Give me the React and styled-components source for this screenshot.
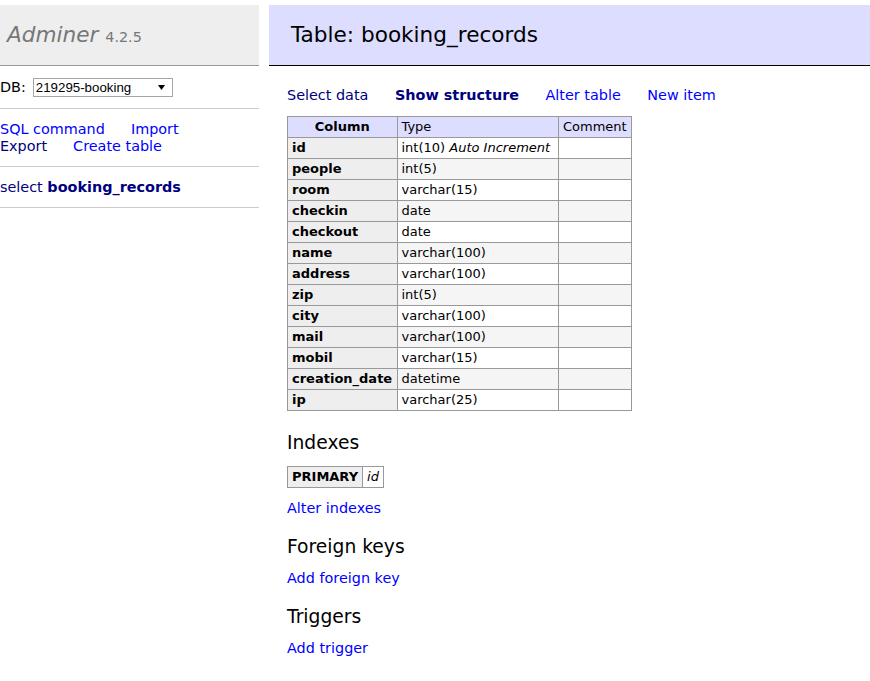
import React from "react";
import styled, { createGlobalStyle } from "styled-components";

const GlobalStyle = createGlobalStyle`
  html, body { margin: 0; padding: 0; background: #fff; }
  body {
    font-family: "DejaVu Sans", Verdana, sans-serif;
    font-size: 14.4px;
    line-height: 18px;
    color: #000;
  }
`;

const Page = styled.div`
  display: flex;
  align-items: flex-start;
  padding-top: 5px;
`;

const Menu = styled.div`
  width: 259px;
  flex: none;
`;

const Logo = styled.h1`
  margin: 0;
  height: 27px;
  padding: 16px 0 17px 7px;
  background: #eee;
  border-bottom: 1px solid #999;
  font-size: 21.6px;
  line-height: 27px;
  font-weight: normal;
  font-style: italic;
  color: #777;
  white-space: nowrap;
  overflow: hidden;
`;

const Version = styled.span`
  font-size: 14.4px;
  line-height: 0;
  font-style: normal;
  color: #777;
`;

const MenuSection = styled.div`
  margin: 0;
  padding: 12px 0 11px;
  border-bottom: 1px solid #ccc;
  line-height: 17px;
`;

const DbRow = styled.div`
  display: flex;
  align-items: center;
  height: 19px;
`;

const SelectBox = styled.div`
  margin-left: 7px;
  width: 140px;
  height: 19px;
  box-sizing: border-box;
  border: 1px solid #a6a6a6;
  background: #fff;
  display: flex;
  align-items: center;
  justify-content: space-between;
  padding: 0 7px 0 2px;
  font-family: "Liberation Sans", Arial, sans-serif;
  font-size: 13.3px;
  color: #000;
`;

const LinkWrap = styled.div`
  display: flex;
  flex-wrap: wrap;
  column-gap: 26px;
  width: 235px;
`;

const Link = styled.a`
  color: ${(p) => (p.$visited ? "#000080" : "#0000ff")};
  font-weight: ${(p) => (p.$bold ? "bold" : "normal")};
  text-decoration: none;
  white-space: nowrap;
  cursor: pointer;
`;

const Content = styled.div`
  flex: 1;
  margin-left: 10px;
  min-width: 0;
`;

const Title = styled.h2`
  margin: 0;
  padding: 16px 0 17px 22px;
  background: #ddf;
  border-bottom: 1px solid #000;
  font-size: 21.6px;
  line-height: 27px;
  font-weight: normal;
  white-space: nowrap;
`;

const Body = styled.div`
  padding-left: 18px;
`;

const Nav = styled.div`
  margin-top: 20px;
  display: flex;
  column-gap: 26.5px;
`;

const Table = styled.table`
  border-collapse: collapse;
  margin-top: ${(p) => p.$mt || 0}px;
  font-size: 13px;
  line-height: 16px;
`;

const HeadRow = styled.tr`
  background: #ddf;
`;

const Th = styled.th`
  border: 1px solid #999;
  padding: 2px 4px;
  background: ${(p) => (p.$head ? "#ddf" : "#eee")};
  font-weight: bold;
  text-align: ${(p) => (p.$center ? "center" : "left")};
  white-space: nowrap;
  width: ${(p) => (p.$w ? `${p.$w}px` : "auto")};
`;

const Td = styled.td`
  border: 1px solid #999;
  padding: 2px 4px;
  white-space: nowrap;
  font-weight: normal;
  text-align: left;
  background: ${(p) => (p.$odd ? "#f5f5f5" : "#fff")};
  width: ${(p) => (p.$w ? `${p.$w}px` : "auto")};
`;

const HeadTd = styled(Td)`
  background: #ddf;
`;

const Italic = styled.i`
  font-style: italic;
`;

const Heading = styled.h3`
  margin: ${(p) => p.$mt}px 0 0;
  font-size: 18.72px;
  line-height: 23px;
  font-weight: normal;
`;

const Para = styled.p`
  margin: ${(p) => p.$mt}px 0 0;
`;

const rows = [
  ["id", "int(10)", "Auto Increment"],
  ["people", "int(5)"],
  ["room", "varchar(15)"],
  ["checkin", "date"],
  ["checkout", "date"],
  ["name", "varchar(100)"],
  ["address", "varchar(100)"],
  ["zip", "int(5)"],
  ["city", "varchar(100)"],
  ["mail", "varchar(100)"],
  ["mobil", "varchar(15)"],
  ["creation_date", "datetime"],
  ["ip", "varchar(25)"],
];

function Arrow() {
  return (
    <svg width="7" height="5" viewBox="0 0 7 5">
      <polygon points="0,0 7,0 3.5,5" fill="#000" />
    </svg>
  );
}

export default function App() {
  return (
    <>
      <GlobalStyle />
      <Page>
        <Menu>
          <Logo>
            Adminer <Version>4.2.5</Version>
          </Logo>
          <MenuSection>
            <DbRow>
              DB:
              <SelectBox>
                <span>219295-booking</span>
                <Arrow />
              </SelectBox>
            </DbRow>
          </MenuSection>
          <MenuSection>
            <LinkWrap>
              <Link>SQL command</Link>
              <Link>Import</Link>
              <Link $visited>Export</Link>
              <Link>Create table</Link>
            </LinkWrap>
          </MenuSection>
          <MenuSection>
            <Link $visited>select</Link> <Link $visited $bold>booking_records</Link>
          </MenuSection>
        </Menu>
        <Content>
          <Title>Table: booking_records</Title>
          <Body>
            <Nav>
              <Link $visited>Select data</Link>
              <Link $visited $bold>Show structure</Link>
              <Link>Alter table</Link>
              <Link>New item</Link>
            </Nav>
            <Table $mt={12}>
              <thead>
                <HeadRow>
                  <Th $head $center $w={100.5}>Column</Th>
                  <HeadTd $w={152.5}>Type</HeadTd>
                  <HeadTd $w={63.5}>Comment</HeadTd>
                </HeadRow>
              </thead>
              <tbody>
                {rows.map(([name, type, extra], i) => (
                  <tr key={name}>
                    <Th>{name}</Th>
                    <Td $odd={i % 2 === 1}>
                      {type}
                      {extra && (
                        <>
                          {" "}
                          <Italic>{extra}</Italic>
                        </>
                      )}
                    </Td>
                    <Td $odd={i % 2 === 1}></Td>
                  </tr>
                ))}
              </tbody>
            </Table>
            <Heading $mt={20}>Indexes</Heading>
            <Table $mt={12}>
              <tbody>
                <tr>
                  <Th>PRIMARY</Th>
                  <Td>
                    <Italic>id</Italic>
                  </Td>
                </tr>
              </tbody>
            </Table>
            <Para $mt={11}>
              <Link>Alter indexes</Link>
            </Para>
            <Heading $mt={18}>Foreign keys</Heading>
            <Para $mt={11}>
              <Link>Add foreign key</Link>
            </Para>
            <Heading $mt={18}>Triggers</Heading>
            <Para $mt={11}>
              <Link>Add trigger</Link>
            </Para>
          </Body>
        </Content>
      </Page>
    </>
  );
}
